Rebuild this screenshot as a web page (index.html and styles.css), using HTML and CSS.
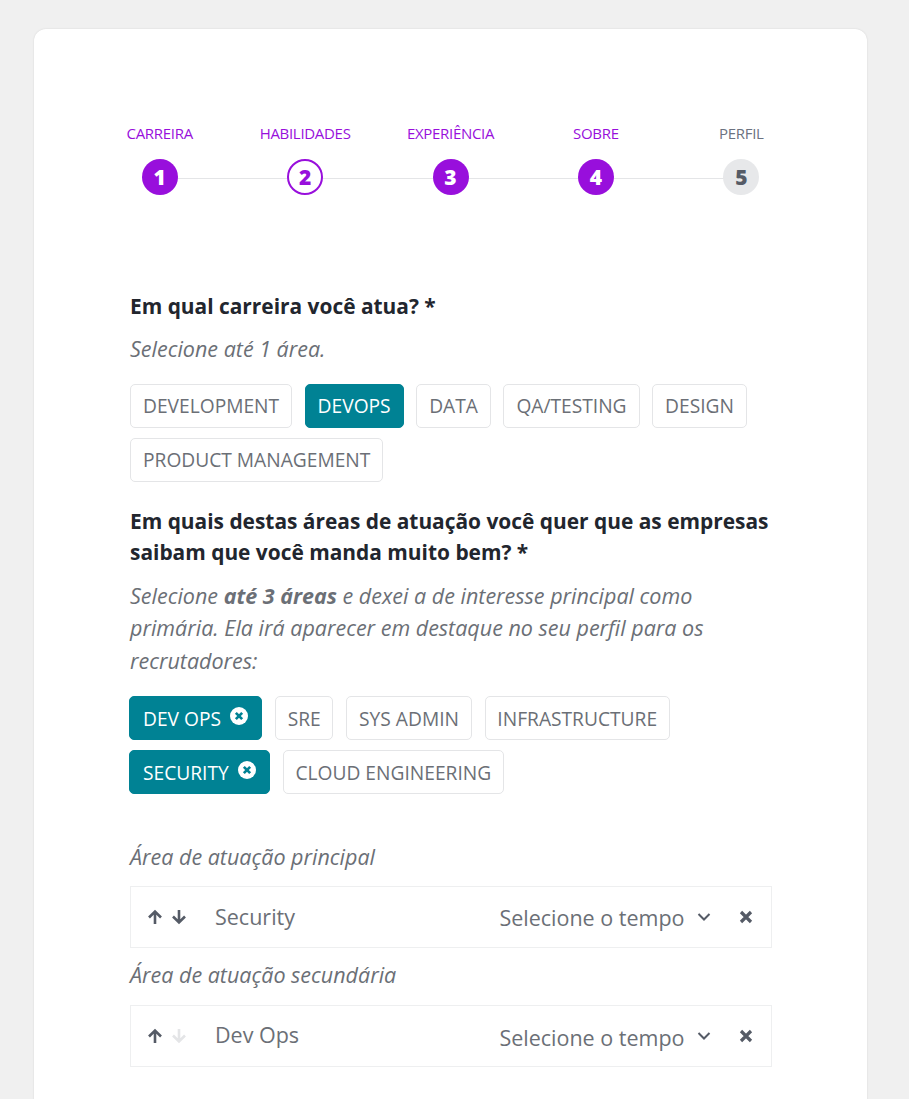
FILE: index.html
```html
<!DOCTYPE html>
<html lang="pt-BR">
<head>
<meta charset="utf-8">
<title>Carreira</title>
<link rel="stylesheet" href="styles.css">
</head>
<body>
<main class="card">
  <ol class="stepper">
    <li class="step done"><span class="step-label">CARREIRA</span><span class="step-num">1</span></li>
    <li class="step current"><span class="step-label">HABILIDADES</span><span class="step-num">2</span></li>
    <li class="step done"><span class="step-label">EXPERIÊNCIA</span><span class="step-num">3</span></li>
    <li class="step done"><span class="step-label">SOBRE</span><span class="step-num">4</span></li>
    <li class="step todo"><span class="step-label">PERFIL</span><span class="step-num">5</span></li>
  </ol>
  <form class="form">
    <h2 class="question">Em qual carreira você atua? *</h2>
    <p class="hint">Selecione até 1 área.</p>
    <div class="tags tags-career">
      <span class="tag">DEVELOPMENT</span>
      <span class="tag on">DEVOPS</span>
      <span class="tag">DATA</span>
      <span class="tag">QA/TESTING</span>
      <span class="tag">DESIGN</span>
      <span class="tag">PRODUCT MANAGEMENT</span>
    </div>
    <h2 class="question q2">Em quais destas áreas de atuação você quer que as empresas saibam que você manda muito bem? *</h2>
    <p class="hint">Selecione <b>até 3 áreas</b> e dexei a de interesse principal como primária. Ela irá aparecer em destaque no seu perfil para os recrutadores:</p>
    <div class="tags tags-area">
      <span class="tag on">DEV OPS<svg class="tag-x" viewBox="0 0 20 20"><circle cx="10" cy="10" r="10" fill="#fff"/><path d="M6.500 6.500l7 7M13.500 6.500l-7 7" stroke="#008294" stroke-width="3" fill="none"/></svg></span>
      <span class="tag">SRE</span>
      <span class="tag">SYS ADMIN</span>
      <span class="tag">INFRASTRUCTURE</span>
      <span class="tag on">SECURITY<svg class="tag-x" viewBox="0 0 20 20"><circle cx="10" cy="10" r="10" fill="#fff"/><path d="M6.500 6.500l7 7M13.500 6.500l-7 7" stroke="#008294" stroke-width="3" fill="none"/></svg></span>
      <span class="tag">CLOUD ENGINEERING</span>
    </div>
    <p class="row-title first">Área de atuação principal</p>
    <div class="row">
      <span class="arrows">
        <svg class="arrow" viewBox="0 0 16 16"><path d="M8 15V2.500M2 8.500l6-6 6 6" fill="none" stroke="currentColor" stroke-width="2.600"/></svg>
        <svg class="arrow" viewBox="0 0 16 16"><path d="M8 1v12.500M2 7.500l6 6 6-6" fill="none" stroke="currentColor" stroke-width="2.600"/></svg>
      </span>
      <span class="row-name">Security</span>
      <span class="row-time">Selecione o tempo</span>
      <svg class="chev" viewBox="0 0 14 14"><path d="M1.500 4l5.500 5.500L12.500 4" fill="none" stroke="currentColor" stroke-width="2"/></svg>
      <svg class="close" viewBox="0 0 14 14"><path d="M2 2l10 10M12 2L2 12" fill="none" stroke="currentColor" stroke-width="3.200"/></svg>
    </div>
    <p class="row-title">Área de atuação secundária</p>
    <div class="row row-low">
      <span class="arrows">
        <svg class="arrow" viewBox="0 0 16 16"><path d="M8 15V2.500M2 8.500l6-6 6 6" fill="none" stroke="currentColor" stroke-width="2.600"/></svg>
        <svg class="arrow off" viewBox="0 0 16 16"><path d="M8 1v12.500M2 7.500l6 6 6-6" fill="none" stroke="currentColor" stroke-width="2.600"/></svg>
      </span>
      <span class="row-name">Dev Ops</span>
      <span class="row-time">Selecione o tempo</span>
      <svg class="chev" viewBox="0 0 14 14"><path d="M1.500 4l5.500 5.500L12.500 4" fill="none" stroke="currentColor" stroke-width="2"/></svg>
      <svg class="close" viewBox="0 0 14 14"><path d="M2 2l10 10M12 2L2 12" fill="none" stroke="currentColor" stroke-width="3.200"/></svg>
    </div>
  </form>
</main>
</body>
</html>
```
FILE: styles.css
```css
* { box-sizing: border-box; }
html, body { height: 100%; }
body {
  margin: 0;
  padding: 29px 42px 0 34px;
  background: #f0f0f0;
  font-family: "Open Sans", sans-serif;
  color: #6b6f76;
  overflow: hidden;
}
.card {
  background: #fff;
  border-radius: 12px 12px 0 0;
  box-shadow: 0 0 2px rgba(0,0,0,.12);
  height: 1200px;
  padding: 95px 53px 0 53px;
}
.stepper {
  list-style: none;
  margin: 0 0 96px;
  padding: 0;
  display: flex;
}
.step {
  flex: 1 1 0;
  display: flex;
  flex-direction: column;
  align-items: center;
  gap: 17px;
  position: relative;
}
.step-label {
  font-size: 15px;
  line-height: 18px;
  letter-spacing: -0.3px;
  color: #980fdc;
}
.step-num {
  position: relative;
  z-index: 1;
  width: 36px;
  height: 36px;
  border-radius: 50%;
  display: flex;
  align-items: center;
  justify-content: center;
  font-size: 21px;
  font-weight: 800;
  background: #980fdc;
  color: #fff;
}
.step:not(:last-child)::after {
  content: "";
  position: absolute;
  left: 50%;
  width: 100%;
  bottom: 16px;
  height: 1.500px;
  background: #e4e5e7;
}
.step.current .step-num { background: #fff; color: #980fdc; border: 2px solid #980fdc; }
.step.todo .step-label { color: #6b7280; }
.step.todo .step-num { background: #e7e8ea; color: #555b66; }
.form { margin: 0 42.500px 0 43px; }
.question {
  margin: 0;
  font-size: 20.900px;
  line-height: 31px;
  font-weight: 700;
  color: #22262e;
}
.q2 { margin-top: 24px; }
.hint {
  margin: 11px 0 0;
  font-size: 21.500px;
  line-height: 32.500px;
  font-style: italic;
  color: #6b6f76;
}
.q2 + .hint { margin-top: 12px; }
.hint b { font-weight: 700; }
.tags { display: flex; flex-wrap: wrap; margin-top: 18px; }
.tags-career { gap: 10px 12.500px; }
.tags-area { gap: 10px 13px; margin-top: 19px; margin-left: -1px; }
.tag {
  display: inline-flex;
  align-items: center;
  height: 44px;
  padding: 0 12px;
  border: 1px solid #e4e5e7;
  border-radius: 5px;
  font-size: 19.200px;
  color: #6b6f76;
  background: #fff;
}
.tags-area .tag { padding: 0 11.700px; }
.tag.on {
  background: #008294;
  border-color: #008294;
  color: #fff;
}
.tags-area .tag.on { padding: 0 13px; }
.tag-x { width: 18px; height: 18px; margin: -5px 0 0 9px; }
.row-title {
  margin: 11px 0 0;
  font-size: 21.500px;
  line-height: 32px;
  font-style: italic;
  color: #6b6f76;
}
.row-title.first { margin-top: 47px; }
.row {
  display: flex;
  align-items: center;
  height: 62px;
  margin-top: 13px;
  padding: 0 18px 0 16px;
  border: 1.500px solid #eeeff0;
  font-size: 21.500px;
  color: #6b6f76;
}
.row-low { margin-top: 14px; }
.arrows { display: flex; gap: 8px; width: 68px; color: #555b66; }
.arrow { width: 16px; height: 16px; }
.arrow.off { color: #e4e5e7; }
.row-name { flex: 1 1 auto; margin-bottom: 2px; }
.row-low .row-name { margin-bottom: 4px; }
.row-low .row-time { position: relative; top: 1px; }
.chev { width: 14px; height: 14px; margin: 0 28px 0 12px; color: #555b66; }
.close { width: 14px; height: 14px; color: #555b66; }
```
